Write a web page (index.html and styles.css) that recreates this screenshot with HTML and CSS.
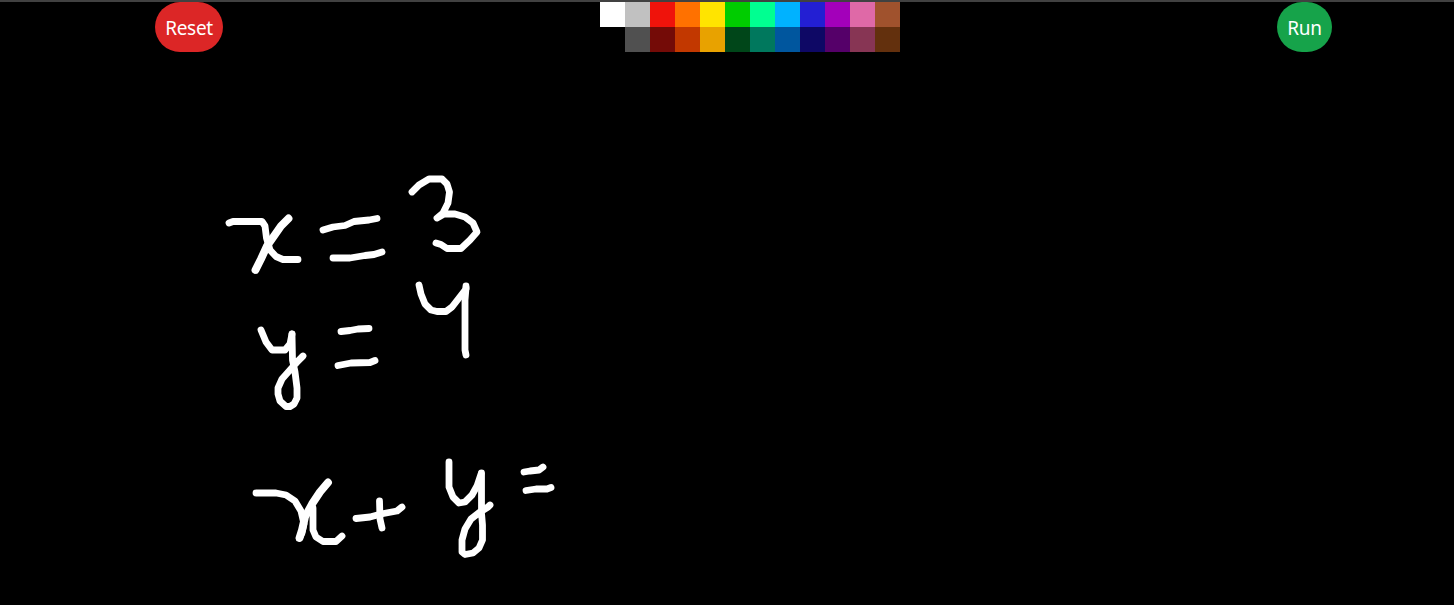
FILE: index.html
```html
<!DOCTYPE html>
<html lang="en">
<head>
<meta charset="utf-8">
<title>Drawing board</title>
<link rel="stylesheet" href="styles.css">
</head>
<body>
<main class="board">
  <header class="toolbar">
    <button class="button reset">Reset</button>
    <div class="palette">
      <span class="swatch white"></span><span class="swatch silver"></span><span class="swatch red"></span><span class="swatch orange"></span><span class="swatch yellow"></span><span class="swatch green"></span><span class="swatch mint"></span><span class="swatch sky"></span><span class="swatch blue"></span><span class="swatch purple"></span><span class="swatch pink"></span><span class="swatch brown"></span>
      <span class="swatch black"></span><span class="swatch gray"></span><span class="swatch maroon"></span><span class="swatch rust"></span><span class="swatch amber"></span><span class="swatch forest"></span><span class="swatch teal"></span><span class="swatch ocean"></span><span class="swatch navy"></span><span class="swatch plum"></span><span class="swatch rose"></span><span class="swatch umber"></span>
    </div>
    <button class="button run">Run</button>
  </header>
  <svg class="drawing" viewBox="0 52 1454 553" aria-label="x = 3, y = 4, x + y =">
    <path d="M229 223L233 221.500H262L265 226L266.500 238L270 250L276 256.500L283 259.500H298"/>
    <path class="bold" d="M288.500 218.500L281 226L274 236L267 246L261 259L255.500 270"/>
    <path d="M323 230L333 227L345 225.500L354 221.500L369 220L377 218.500"/>
    <path d="M333 258H350L365 255.500L374 254.500L382 252"/>
    <path d="M412 192L419 185L429 179H442L447 184L449.500 192L448 203L443 213L437 218L444 214H455L465 217L473 223L477 232L470 240L461 248.500H447L441 244.500L436 243"/>
    <path d="M419 285L421 294L425 304L431 310L437 311.500H446L452 307L459 298L466 289V286"/>
    <path d="M466 288L465 300V350L466 355"/>
    <path d="M261 330L266 342L272 350H285L290 344L292 334"/>
    <path d="M292 334L292.500 360L295 372L297 388V398L294 404L290 406.500H286L280 401L278 394V388L282 379L290 370L298 361L303 356"/>
    <path d="M341 331.500L350 330.500L358 329L369 328.500"/>
    <path d="M338 365.500L351 363L370 362.500L375 360.500"/>
    <path d="M256 493H276L286 495L295 501L301 511L304 524L302 533L299.500 538"/>
    <path class="bold" d="M328 482.500L320 492L312 504L305 517L302 530L299.500 538"/>
    <path d="M313 508V530L316 537L323 541.500H336L342 536"/>
    <path d="M356 518.500L370 517L381 514L397 511L402 507"/>
    <path d="M379.500 501L380 519L382 528"/>
    <path d="M449 462V487L453 497L459 503L465 502L472 495L477 486L481 474"/>
    <path d="M481.500 473V513L482.500 525V540L479 548L473 553L465 554.500L462 552V540L465 529L471 519L480 512L488 507L490 505"/>
    <path d="M524 472L530 471L539 470L543 467"/>
    <path d="M526 490.500L536 489L547 489L551 487.500"/>
  </svg>
</main>
</body>
</html>
```

FILE: styles.css
```css
body {
  margin: 0;
  background: #000;
  overflow: hidden;
}

.board {
  box-sizing: border-box;
  height: 100vh;
  border-top: 2px solid #414141;
  display: flex;
  flex-direction: column;
}

.toolbar {
  display: flex;
  justify-content: space-between;
  height: 50px;
  padding: 0 122px 0 155px;
}

.button {
  height: 50px;
  padding: 2px 0 0;
  border: 0;
  border-radius: 25px;
  color: #fff;
  font: 19px/24px "Noto Sans", "Open Sans", sans-serif;
  letter-spacing: -0.3px;
}

.reset { width: 68px; background: #dc2626; }
.run { width: 55px; background: #16a34a; }

.palette {
  display: grid;
  grid-template-columns: repeat(12, 25px);
  grid-template-rows: repeat(2, 25px);
  margin-right: auto;
  margin-left: 377px;
}

.white { background: #fff; }
.silver { background: #c1c1c1; }
.red { background: #ef130b; }
.orange { background: #ff7100; }
.yellow { background: #ffe400; }
.green { background: #00cc00; }
.mint { background: #00ff91; }
.sky { background: #00b2ff; }
.blue { background: #231fd3; }
.purple { background: #a300ba; }
.pink { background: #df69a7; }
.brown { background: #a0522d; }
.black { background: #000; }
.gray { background: #505050; }
.maroon { background: #740b07; }
.rust { background: #c23800; }
.amber { background: #e8a200; }
.forest { background: #004619; }
.teal { background: #00785d; }
.ocean { background: #00569e; }
.navy { background: #0e0865; }
.plum { background: #550069; }
.rose { background: #873554; }
.umber { background: #63300d; }

.drawing {
  width: 1454px;
  height: 553px;
  fill: none;
  stroke: #fff;
  stroke-width: 6.8;
  stroke-linecap: round;
  stroke-linejoin: round;
}

.bold { stroke-width: 7.8; }
```
